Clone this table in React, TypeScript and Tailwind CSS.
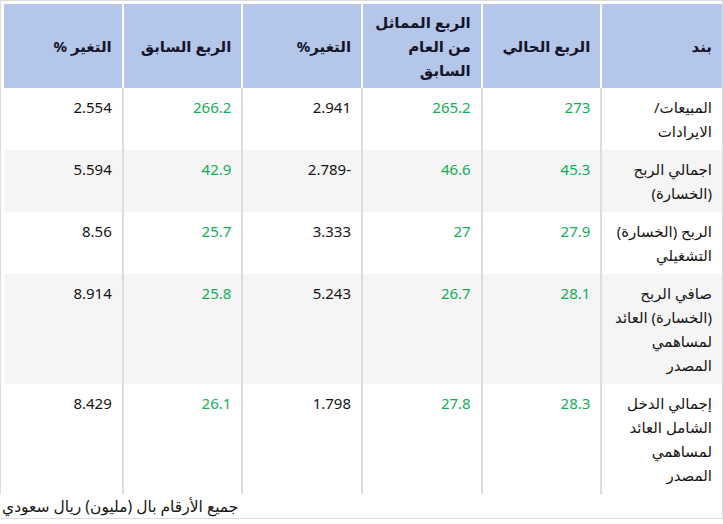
import React from 'react';

type Row = {
  item: string;
  current: string;
  sameLastYear: string;
  changeYoY: string;
  previous: string;
  changeQoQ: string;
};

const rows: Row[] = [
  { item: 'المبيعات/ الايرادات', current: '273', sameLastYear: '265.2', changeYoY: '2.941', previous: '266.2', changeQoQ: '2.554' },
  { item: 'اجمالي الربح (الخسارة)', current: '45.3', sameLastYear: '46.6', changeYoY: '-2.789', previous: '42.9', changeQoQ: '5.594' },
  { item: 'الربح (الخسارة) التشغيلي', current: '27.9', sameLastYear: '27', changeYoY: '3.333', previous: '25.7', changeQoQ: '8.56' },
  { item: 'صافي الربح (الخسارة) العائد لمساهمي المصدر', current: '28.1', sameLastYear: '26.7', changeYoY: '5.243', previous: '25.8', changeQoQ: '8.914' },
  { item: 'إجمالي الدخل الشامل العائد لمساهمي المصدر', current: '28.3', sameLastYear: '27.8', changeYoY: '1.798', previous: '26.1', changeQoQ: '8.429' },
];

const headers = ['بند', 'الربع الحالي', 'الربع المماثل من العام السابق', 'التغير%', 'الربع السابق', 'التغير %'];

export default function App() {
  return (
    <div
      className="w-[723px] bg-white text-[15px] leading-6 text-[#161616]"
      style={{ fontFamily: '"Noto Sans", "DejaVu Sans", sans-serif' }}
    >
      <div className="border-t border-r border-b border-[#dcdcdc]">
        {/* Table */}
        <div className="border-l border-[#dcdcdc] pt-[3px] pl-[3px]">
          <table dir="rtl" className="w-full table-fixed border-separate border-spacing-0">
            <thead>
              <tr>
                {headers.map((h, i) => (
                  <th
                    key={h}
                    className={`h-[84px] bg-[#b4c6e9] px-[10px] py-1.5 text-right align-middle font-bold text-[#15152a] ${
                      i > 0 ? 'border-r-2 border-white' : ''
                    }`}
                  >
                    {h}
                  </th>
                ))}
              </tr>
            </thead>
            <tbody>
              {rows.map((r, idx) => {
                const bg = idx % 2 === 1 ? 'bg-[#f5f5f5]' : 'bg-white';
                const cells = [
                  { v: r.item, green: false },
                  { v: r.current, green: true },
                  { v: r.sameLastYear, green: true },
                  { v: r.changeYoY, green: false },
                  { v: r.previous, green: true },
                  { v: r.changeQoQ, green: false },
                ];
                return (
                  <tr key={r.item} className={bg}>
                    {cells.map((c, i) => (
                      <td
                        key={i}
                        className={`px-[10px] py-[7px] text-right align-top ${
                          i > 0 ? 'border-r-2 border-[#dddddd]' : ''
                        } ${c.green ? 'text-[#12ad58]' : 'text-[#161616]'}`}
                      >
                        {c.v}
                      </td>
                    ))}
                  </tr>
                );
              })}
            </tbody>
          </table>
        </div>
        {/* Footnote */}
        <div dir="rtl" className="text-left pl-[2px] text-[15.5px] leading-6">
          جميع الأرقام بال (مليون) ريال سعودي
        </div>
      </div>
    </div>
  );
}
